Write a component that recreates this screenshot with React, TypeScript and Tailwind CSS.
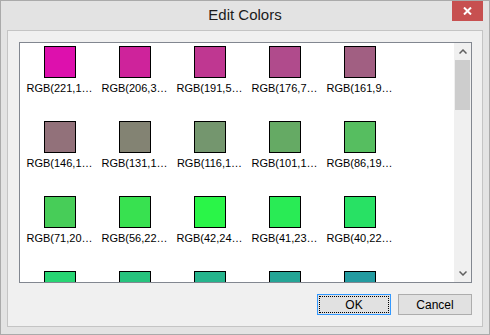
import { ReactNode } from 'react';

type Swatch = [number, number, number];

const swatches: Swatch[] = [
  [221, 16, 173],
  [206, 35, 155],
  [191, 55, 145],
  [176, 75, 140],
  [161, 95, 130],
  [146, 113, 122],
  [131, 131, 115],
  [116, 150, 110],
  [101, 170, 100],
  [86, 190, 96],
  [71, 205, 88],
  [56, 225, 80],
  [42, 245, 72],
  [41, 235, 85],
  [40, 225, 100],
  [39, 213, 115],
  [38, 195, 125],
  [37, 180, 140],
  [36, 165, 150],
  [35, 155, 160],
];

const font = { fontFamily: '"Liberation Sans", Arial, sans-serif' };

function ColorCell({ rgb }: { rgb: Swatch }) {
  const full = `RGB(${rgb[0]},${rgb[1]},${rgb[2]})`;
  // the list control cuts labels after nine characters
  const label = full.slice(0, 9) + '…';
  return (
    <div className="flex h-[75px] flex-col items-center" title={full}>
      <div
        className="h-[32px] w-[32px] shrink-0 border border-black"
        style={{ backgroundColor: `rgb(${rgb[0]},${rgb[1]},${rgb[2]})` }}
      />
      <span className="mt-[3px] whitespace-nowrap text-[11px] leading-[14px] text-black">
        {label}
      </span>
    </div>
  );
}

function ScrollButton({ children }: { children: ReactNode }) {
  return (
    <div className="flex h-[17px] shrink-0 items-center justify-center">
      {children}
    </div>
  );
}

function Button({
  children,
  focused = false,
}: {
  children: ReactNode;
  focused?: boolean;
}) {
  return (
    <button
      type="button"
      className={`h-[21px] w-[74px] border bg-[#e1e1e1] p-px text-[12px] text-black ${
        focused ? 'border-[#3399ff]' : 'border-[#adadad]'
      }`}
    >
      <div
        className={`flex h-full w-full items-center justify-center border ${
          focused ? 'border-dotted border-black' : 'border-transparent'
        }`}
      >
        {children}
      </div>
    </button>
  );
}

export default function App() {
  return (
    <div
      className="flex h-[335px] w-[490px] flex-col border border-[#aaaaaa] bg-[#e3e3e3]"
      style={font}
    >
      {/* title bar */}
      <div className="grid h-[29px] shrink-0 grid-cols-[1fr_auto_1fr] items-center">
        <div />
        <span className="text-[15px] text-[#1b1b1b]">Edit Colors</span>
        <button
          type="button"
          className="mr-[6px] flex h-[20px] w-[31px] items-center justify-center self-start justify-self-end bg-[#c75050]"
        >
          <svg width="9" height="8" viewBox="0 0 9 8">
            <path d="M1 0.5 L8 7.5 M8 0.5 L1 7.5" stroke="#fff" strokeWidth="2" />
          </svg>
        </button>
      </div>

      {/* client area */}
      <div className="mx-[6px] mb-[7px] flex flex-1 flex-col border border-[#c4c4c4] bg-[#f0f0f0] pb-[11px] pl-[11px] pr-[10px] pt-[11px]">
        <div className="flex h-[241px] shrink-0 border border-[#828790] bg-white">
          <div className="flex-1 overflow-hidden">
            <div className="grid grid-cols-[repeat(5,75px)] pl-[2px] pt-[3px]">
              {swatches.map((c, i) => (
                <ColorCell key={i} rgb={c} />
              ))}
            </div>
          </div>
          <div className="flex w-[17px] shrink-0 flex-col bg-[#f0f0f0]">
            <ScrollButton>
              <svg width="8" height="5" viewBox="0 0 8 5">
                <path d="M0.5 4.5 L4 1 L7.5 4.5" fill="none" stroke="#606060" strokeWidth="1.5" />
              </svg>
            </ScrollButton>
            <div className="flex-1 px-px">
              <div className="h-[50px] bg-[#cdcdcd]" />
            </div>
            <ScrollButton>
              <svg width="8" height="5" viewBox="0 0 8 5">
                <path d="M0.5 0.5 L4 4 L7.5 0.5" fill="none" stroke="#606060" strokeWidth="1.5" />
              </svg>
            </ScrollButton>
          </div>
        </div>

        <div className="mt-[11px] flex justify-end gap-[7px]">
          <Button focused>OK</Button>
          <Button>Cancel</Button>
        </div>
      </div>
    </div>
  );
}
